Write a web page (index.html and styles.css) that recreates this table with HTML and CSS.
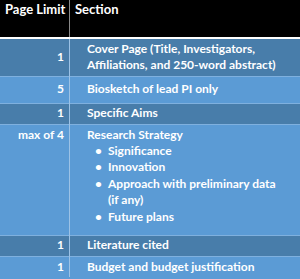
FILE: index.html
```html
<!DOCTYPE html>
<html>
<head>
<meta charset="utf-8">
<link rel="stylesheet" href="styles.css">
</head>
<body>
<table class="tbl">
  <thead>
    <tr class="head">
      <th class="c1">Page Limit</th>
      <th class="c2">Section</th>
    </tr>
  </thead>
  <tbody>
    <tr class="dark r-cover">
      <td class="c1">1</td>
      <td class="c2">Cover Page (Title, Investigators,<br>Affiliations, and 250-word abstract)</td>
    </tr>
    <tr class="light r-bio">
      <td class="c1">5</td>
      <td class="c2">Biosketch of lead PI only</td>
    </tr>
    <tr class="dark r-one">
      <td class="c1">1</td>
      <td class="c2">Specific Aims</td>
    </tr>
    <tr class="light r-rs">
      <td class="c1">max of 4</td>
      <td class="c2">Research Strategy
        <ul class="bul">
          <li>Significance</li>
          <li>Innovation</li>
          <li>Approach with preliminary data<br>(if any)</li>
          <li>Future plans</li>
        </ul>
      </td>
    </tr>
    <tr class="dark r-one">
      <td class="c1">1</td>
      <td class="c2">Literature cited</td>
    </tr>
    <tr class="light r-one">
      <td class="c1">1</td>
      <td class="c2">Budget and budget justification</td>
    </tr>
  </tbody>
</table>
</body>
</html>
```
FILE: styles.css
```css
html, body {
  margin: 0;
  padding: 0;
  background: #5b9bd5;
}
.tbl {
  width: 300px;
  border-collapse: collapse;
  font-family: Lato, "Open Sans", sans-serif;
  font-weight: 700;
  font-size: 12px;
  line-height: 16.4px;
  color: #ffffff;
}
.tbl th, .tbl td {
  padding: 0;
}
.head {
  background: #000000;
  height: 38px;
  border-bottom: 2px solid #ffffff;
}
.head th {
  text-align: left;
  vertical-align: top;
  font-weight: 700;
  font-size: 13px;
  line-height: 16px;
  padding-top: 1px;
}
.head th.c1 {
  width: 64px;
  padding-left: 5px;
  border-right: 1px solid #8a8a8a;
}
.head th.c2 {
  padding-left: 5px;
}
tbody td {
  vertical-align: middle;
}
tbody .c1 {
  width: 64px;
  padding-right: 5px;
  text-align: right;
  border-right: 1px solid #9cc2e6;
}
tbody .c2 {
  padding-left: 17px;
}
tbody tr {
  border-top: 1px solid #7fb0de;
}
.dark { background: #487daa; }
.light { background: #5b9bd5; }
.r-cover { height: 38px; }
.r-bio { height: 27px; }
.r-one { height: 21px; }
.r-rs { height: 111px; }
.r-rs td {
  vertical-align: top;
  padding-top: 2px;
}
.bul {
  list-style: none;
  margin: 0;
  padding: 0 0 0 21px;
}
.bul li {
  position: relative;
}
.bul li::before {
  content: "\2022";
  position: absolute;
  left: -13px;
}
```
